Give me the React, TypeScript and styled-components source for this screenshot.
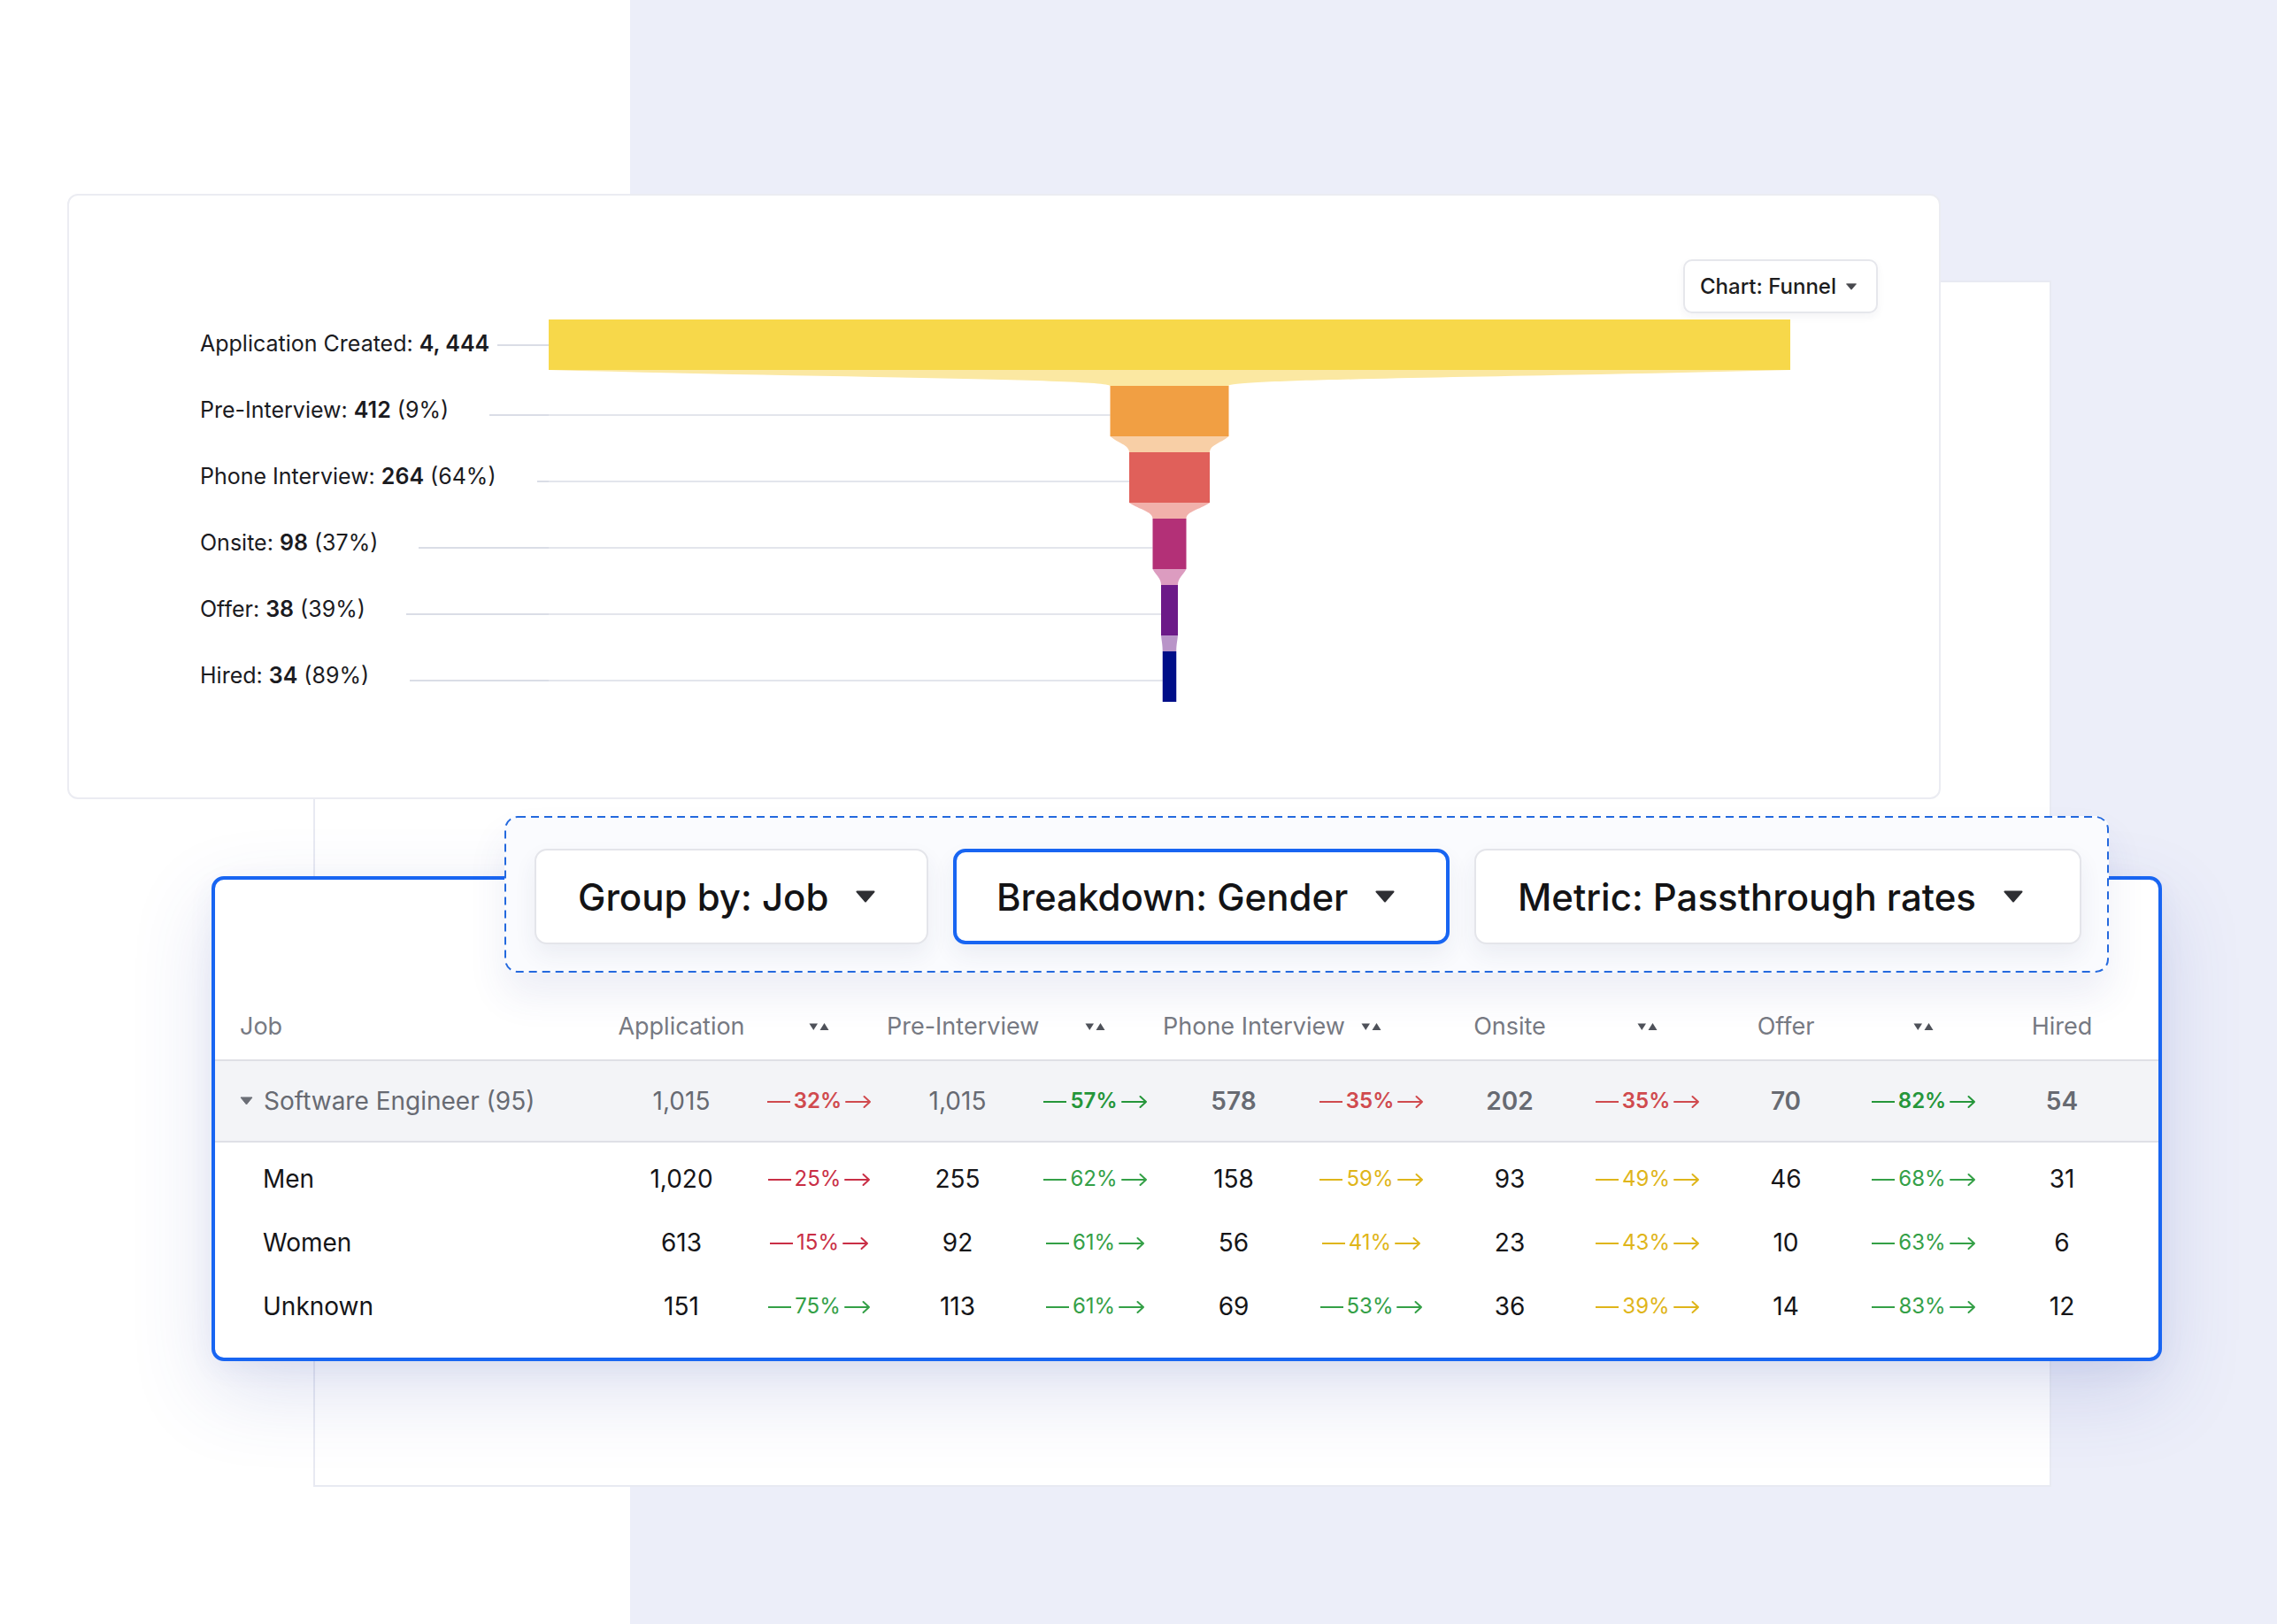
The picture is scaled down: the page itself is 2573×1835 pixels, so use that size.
import React from "react";
import styled, { createGlobalStyle, css } from "styled-components";

const GlobalStyle = createGlobalStyle`
  html, body { margin: 0; padding: 0; }
  body {
    font-family: Inter, "Noto Sans", "Liberation Sans", sans-serif;
    background: linear-gradient(90deg, #ffffff 0, #ffffff 712px, #eceef9 712px, #eceef9 100%);
    min-height: 1835px;
    -webkit-font-smoothing: antialiased;
  }
  * { box-sizing: border-box; }
`;

const BLUE = "#1865f2";

const Page = styled.div`
  width: 2573px;
  height: 1835px;
  overflow: hidden;
  padding: 317px 0 0 354px;
`;

const Sheet = styled.div`
  width: 1964px;
  height: 1363px;
  background: #ffffff;
  border: 2px solid #e8eaf2;
`;

/* ---------- Funnel chart card ---------- */

const ChartCard = styled.section`
  margin: -100px 0 0 -280px;
  width: 2117px;
  height: 684px;
  background: #ffffff;
  border: 2px solid #ebecf2;
  border-radius: 12px;
  padding: 72px 69px 0 148px;
`;

const ChartHeader = styled.div`
  display: flex;
  justify-content: flex-end;
  height: 61px;
`;

const ChartSelect = styled.div`
  display: flex;
  align-items: center;
  gap: 11px;
  height: 61px;
  padding: 0 22px 0 17px;
  border: 2px solid #e6e7ec;
  border-radius: 10px;
  background: #fff;
  box-shadow: 0 4px 10px rgba(30, 40, 80, 0.05);
  font-size: 24px;
  font-weight: 500;
  color: #1d1d20;
  white-space: nowrap;
`;

const FunnelBody = styled.div`
  display: flex;
  margin-top: 7px;
`;

const LabelColumn = styled.div`
  width: 394px;
  display: flex;
  flex-direction: column;
  gap: 18px;
`;

const LabelRow = styled.div`
  height: 57px;
  display: flex;
  align-items: center;
`;

const StageLabel = styled.div`
  font-size: 25px;
  line-height: 30px;
  color: #1b1b1f;
  white-space: nowrap;
  padding-bottom: 4px;
  strong { font-weight: 600; }
`;

const Leader = styled.div<{ $gap: number; $shift: number }>`
  flex: 1;
  height: 1.5px;
  background: #dadde6;
  margin-left: ${(p) => p.$gap}px;
  margin-top: ${(p) => p.$shift * 2}px;
`;

/* ---------- Table card ---------- */

const TableCard = styled.section`
  position: relative;
  margin: 87px 0 0 -117px;
  width: 2204px;
  height: 548px;
  background: #ffffff;
  border: 4px solid ${BLUE};
  border-radius: 14px;
  box-shadow: 0 34px 90px rgba(60, 80, 170, 0.17), 0 8px 30px rgba(60, 80, 170, 0.06);
`;

const Toolbar = styled.div`
  position: absolute;
  left: 327px;
  top: -72px;
  width: 1813px;
  height: 177px;
  display: flex;
  gap: 28px;
  padding: 37px 30px 32px 34px;
  background: #fafbfe;
  border-radius: 14px;
  box-shadow: 0 26px 44px rgba(50, 70, 150, 0.09);
`;

const DashedOutline = styled.svg`
  position: absolute;
  left: 0;
  top: 0;
  overflow: visible;
  pointer-events: none;
`;

const SelectButton = styled.div<{ $width: number; $active?: boolean }>`
  flex: none;
  width: ${(p) => p.$width}px;
  height: 108px;
  display: flex;
  align-items: center;
  gap: 31px;
  padding: 0 0 0 ${(p) => (p.$active ? 45 : 47)}px;
  background: #ffffff;
  border: ${(p) => (p.$active ? `4px solid ${BLUE}` : "2px solid #e4e5ea")};
  border-radius: 14px;
  box-shadow: 0 12px 26px rgba(40, 50, 100, 0.07);
  font-size: 42px;
  font-weight: 500;
  color: #131315;
  white-space: nowrap;
`;

const gridCols = css`
  display: grid;
  grid-template-columns: 419px repeat(5, 160px 152px) 160px;
  padding: 0 29px 0 28px;
  align-items: center;
`;

const HeaderRow = styled.div`
  ${gridCols};
  height: 203px;
  align-items: end;
  padding-bottom: 21px;
  font-size: 27px;
  line-height: 32px;
  color: #777a83;
`;

const GroupRow = styled.div`
  ${gridCols};
  height: 94px;
  background: #f3f4f7;
  border-top: 2px solid #dfe0e6;
  border-bottom: 2px solid #dfe0e6;
  font-size: 28px;
  line-height: 34px;
  color: #676a72;
`;

const TableBody = styled.div`
  padding: 5px 0 22px;
`;

const DataRow = styled.div`
  ${gridCols};
  height: 72px;
  font-size: 28px;
  line-height: 34px;
  color: #151518;
`;

const JobCell = styled.div<{ $indent: number }>`
  display: flex;
  align-items: center;
  gap: 12px;
  padding-left: ${(p) => p.$indent}px;
  white-space: nowrap;
`;

const NumCell = styled.div<{ $weight?: number }>`
  text-align: center;
  font-weight: ${(p) => p.$weight ?? 400};
  white-space: nowrap;
`;

const IconCell = styled.div`
  display: flex;
  justify-content: center;
  align-items: center;
  height: 32px;
`;

const toneColors: Record<string, string> = {
  red: "#c92f46",
  redStrong: "#d04a4e",
  green: "#34a047",
  greenStrong: "#25963a",
  yellow: "#dfb51a",
};

const PctCell = styled.div<{ $tone: string; $bold?: boolean }>`
  display: flex;
  justify-content: center;
  align-items: center;
  gap: 4px;
  font-size: 24px;
  font-weight: ${(p) => (p.$bold ? 600 : 400)};
  color: ${(p) => toneColors[p.$tone]};
  white-space: nowrap;
`;

const Dash = styled.span`
  display: block;
  width: 26px;
  height: 2px;
  background: currentColor;
  transform: translateY(1px);
`;

/* ---------- icons ---------- */

const SmallCaret = () => (
  <svg width="12" height="8" viewBox="0 0 12 8">
    <path d="M0.5 0.8 H11.5 L6 7.2 Z" fill="#47484d" strokeLinejoin="round" stroke="#47484d" strokeWidth="0.8" />
  </svg>
);

const BigCaret = () => (
  <svg width="22" height="14" viewBox="0 0 22 14">
    <path d="M1.5 1.5 H20.5 L11 12.5 Z" fill="#2e2f33" stroke="#2e2f33" strokeWidth="2" strokeLinejoin="round" />
  </svg>
);

const RowCaret = () => (
  <svg width="15" height="10" viewBox="0 0 15 10">
    <path d="M1 1 H14 L7.5 9 Z" fill="#6b6e76" stroke="#6b6e76" strokeWidth="1" strokeLinejoin="round" />
  </svg>
);

const SortIcon = () => (
  <svg width="24" height="12" viewBox="0 0 24 12">
    <path d="M0.5 2.5 H10 L5.25 10 Z" fill="#4f525a" />
    <path d="M12.5 10 H22.5 L17.5 2 Z" fill="#4f525a" />
  </svg>
);

const Arrow = () => (
  <svg width="30" height="16" viewBox="0 0 30 16" style={{ transform: "translateY(1px)" }}>
    <path d="M1 8 H28 M21.5 2 L28 8 L21.5 14" fill="none" stroke="currentColor" strokeWidth="2" strokeLinecap="round" strokeLinejoin="round" />
  </svg>
);

/* ---------- data ---------- */

const stages = [
  { name: "Application Created", value: "4, 444", pct: "", width: 1403, color: "#f7d84a", neck: "#fbe8a2" },
  { name: "Pre-Interview", value: "412", pct: "9%", width: 134, color: "#f19f43", neck: "#f8cfa6" },
  { name: "Phone Interview", value: "264", pct: "64%", width: 91, color: "#e0605a", neck: "#f1b1ab" },
  { name: "Onsite", value: "98", pct: "37%", width: 38, color: "#b33077", neck: "#dc9cc0" },
  { name: "Offer", value: "38", pct: "39%", width: 19, color: "#6c1a88", neck: "#b994c8" },
  { name: "Hired", value: "34", pct: "89%", width: 15.5, color: "#000e88", neck: "" },
];

const columns = ["Application", "Pre-Interview", "Phone Interview", "Onsite", "Offer", "Hired"];

type Rate = { v: string; tone: string };

const groupRow = {
  label: "Software Engineer (95)",
  values: ["1,015", "1,015", "578", "202", "70", "54"],
  weights: [400, 400, 600, 600, 600, 600],
  rates: [
    { v: "32%", tone: "redStrong" },
    { v: "57%", tone: "greenStrong" },
    { v: "35%", tone: "redStrong" },
    { v: "35%", tone: "redStrong" },
    { v: "82%", tone: "greenStrong" },
  ] as Rate[],
};

const dataRows: { label: string; values: string[]; rates: Rate[] }[] = [
  {
    label: "Men",
    values: ["1,020", "255", "158", "93", "46", "31"],
    rates: [
      { v: "25%", tone: "red" },
      { v: "62%", tone: "green" },
      { v: "59%", tone: "yellow" },
      { v: "49%", tone: "yellow" },
      { v: "68%", tone: "green" },
    ],
  },
  {
    label: "Women",
    values: ["613", "92", "56", "23", "10", "6"],
    rates: [
      { v: "15%", tone: "red" },
      { v: "61%", tone: "green" },
      { v: "41%", tone: "yellow" },
      { v: "43%", tone: "yellow" },
      { v: "63%", tone: "green" },
    ],
  },
  {
    label: "Unknown",
    values: ["151", "113", "69", "36", "14", "12"],
    rates: [
      { v: "75%", tone: "green" },
      { v: "61%", tone: "green" },
      { v: "53%", tone: "green" },
      { v: "39%", tone: "yellow" },
      { v: "83%", tone: "green" },
    ],
  },
];

/* ---------- funnel drawing ---------- */

const FunnelChart = () => {
  const cx = 701.5;
  const step = 75;
  const barH = 57;
  const parts: React.ReactNode[] = [];
  stages.forEach((s, i) => {
    const top = step * i;
    const x = cx - s.width / 2;
    if (i > 0) {
      parts.push(
        <line key={`g${i}`} x1={0} x2={x} y1={top + 33} y2={top + 33} stroke="#dadde6" strokeWidth={1.5} />
      );
    }
    parts.push(<rect key={`b${i}`} x={x} y={top} width={s.width} height={barH} fill={s.color} />);
    const next = stages[i + 1];
    if (next) {
      const y0 = top + barH;
      const y1 = step * (i + 1);
      const dy = y1 - y0;
      const l0 = cx - s.width / 2;
      const l1 = cx - next.width / 2;
      const r0 = cx + s.width / 2;
      const r1 = cx + next.width / 2;
      const dl = l1 - l0;
      const d = [
        `M${l0} ${y0}`,
        `L${r0} ${y0}`,
        `C${r0 - dl * 0.45} ${y0 + dy * 0.45} ${r1} ${y0 + dy * 0.55} ${r1} ${y1}`,
        `L${l1} ${y1}`,
        `C${l1} ${y0 + dy * 0.55} ${l0 + dl * 0.45} ${y0 + dy * 0.45} ${l0} ${y0}`,
        "Z",
      ].join(" ");
      parts.push(<path key={`n${i}`} d={d} fill={s.neck} />);
    }
  });
  return (
    <svg width="1403" height="432" viewBox="0 0 1403 432">
      {parts}
    </svg>
  );
};

const Rate = ({ rate, bold }: { rate: Rate; bold?: boolean }) => (
  <PctCell $tone={rate.tone} $bold={bold}>
    <Dash />
    <span>{rate.v}</span>
    <Arrow />
  </PctCell>
);

export default function App() {
  return (
    <>
      <GlobalStyle />
      <Page>
        <Sheet>
          <ChartCard>
            <ChartHeader>
              <ChartSelect>
                Chart: Funnel
                <SmallCaret />
              </ChartSelect>
            </ChartHeader>
            <FunnelBody>
              <LabelColumn>
                {stages.map((s, i) => (
                  <LabelRow key={s.name}>
                    <StageLabel>
                      {s.name}: <strong>{s.value}</strong>
                      {s.pct ? ` (${s.pct})` : ""}
                    </StageLabel>
                    <Leader $gap={i === 0 ? 9 : 46} $shift={i === 0 ? 0.5 : 4.5} />
                  </LabelRow>
                ))}
              </LabelColumn>
              <FunnelChart />
            </FunnelBody>
          </ChartCard>

          <TableCard>
            <Toolbar>
              <DashedOutline width="1813" height="177" viewBox="0 0 1813 177">
                <rect x="1" y="1" width="1811" height="175" rx="14" fill="none" stroke="#2469de" strokeWidth="2" strokeDasharray="9 6" />
              </DashedOutline>
              <SelectButton $width={445}>
                Group by: Job
                <BigCaret />
              </SelectButton>
              <SelectButton $width={561} $active>
                Breakdown: Gender
                <BigCaret />
              </SelectButton>
              <SelectButton $width={686}>
                Metric: Passthrough rates
                <BigCaret />
              </SelectButton>
            </Toolbar>

            <HeaderRow>
              <JobCell $indent={0}>Job</JobCell>
              {columns.map((c, i) => (
                <React.Fragment key={c}>
                  <NumCell>{c}</NumCell>
                  {i < columns.length - 1 && (
                    <IconCell>
                      <SortIcon />
                    </IconCell>
                  )}
                </React.Fragment>
              ))}
            </HeaderRow>

            <GroupRow>
              <JobCell $indent={0}>
                <RowCaret />
                {groupRow.label}
              </JobCell>
              {groupRow.values.map((v, i) => (
                <React.Fragment key={i}>
                  <NumCell $weight={groupRow.weights[i]}>{v}</NumCell>
                  {groupRow.rates[i] && <Rate rate={groupRow.rates[i]} bold />}
                </React.Fragment>
              ))}
            </GroupRow>

            <TableBody>
              {dataRows.map((r) => (
                <DataRow key={r.label}>
                  <JobCell $indent={26}>{r.label}</JobCell>
                  {r.values.map((v, i) => (
                    <React.Fragment key={i}>
                      <NumCell>{v}</NumCell>
                      {r.rates[i] && <Rate rate={r.rates[i]} />}
                    </React.Fragment>
                  ))}
                </DataRow>
              ))}
            </TableBody>
          </TableCard>
        </Sheet>
      </Page>
    </>
  );
}
